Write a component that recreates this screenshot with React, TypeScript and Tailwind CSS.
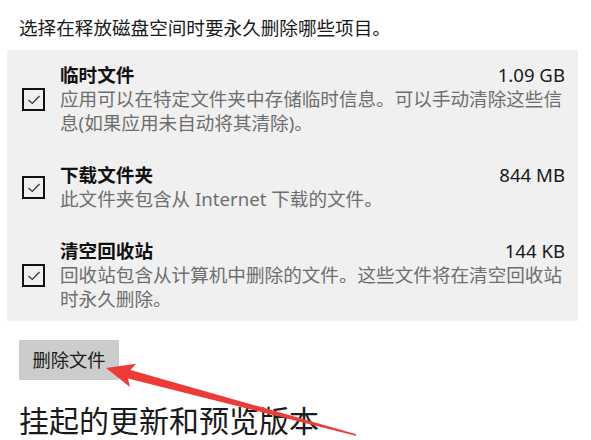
import React from "react";

const font = { fontFamily: '"Noto Sans", "Noto Sans CJK SC", sans-serif' };

function Check() {
  return (
    <div className="w-[23px] h-[23px] shrink-0 border-[2.5px] border-[#111] flex items-center justify-center">
      <svg width="18" height="18" viewBox="0 0 18 18">
        <polyline points="3.5,10 7.3,13.5 14.5,6" fill="none" stroke="#333" strokeWidth="1.2" />
      </svg>
    </div>
  );
}

function Item({ title, size, desc }: { title: string; size: string; desc: string }) {
  return (
    <div className="flex items-center gap-[15px]">
      <Check />
      <div className="flex-1 min-w-0">
        <div className="flex justify-between leading-[24px]">
          <span className="font-bold text-[#111]">{title}</span>
          <span className="text-[#1a1a1a]">{size}</span>
        </div>
        <div className="text-[#6e6e6e] leading-[24px]">{desc}</div>
      </div>
    </div>
  );
}

export default function App() {
  return (
    <div className="relative w-[591px] h-[440px] overflow-hidden bg-white text-[18.6px]" style={font}>
      <div className="pt-[16px] pl-[19px] leading-[24px] text-[#1a1a1a]">选择在释放磁盘空间时要永久删除哪些项目。</div>
      <div className="mt-[10px] ml-[7px] w-[571px] bg-[#f0f0f0] pl-[15px] pr-[13px] pt-[13px] pb-[10px] flex flex-col gap-[28px]">
        <Item title="临时文件" size="1.09 GB" desc="应用可以在特定文件夹中存储临时信息。可以手动清除这些信息(如果应用未自动将其清除)。" />
        <Item title="下载文件夹" size="844 MB" desc="此文件夹包含从 Internet 下载的文件。" />
        <Item title="清空回收站" size="144 KB" desc="回收站包含从计算机中删除的文件。这些文件将在清空回收站时永久删除。" />
      </div>
      <div className="ml-[19px] mt-[19px] w-[100px] h-[40px] bg-[#cccccc] flex items-center justify-center text-[#1a1a1a] text-[18.3px]">
        删除文件
      </div>
      <div className="ml-[19px] mt-[26px] text-[30px] leading-[30px] text-[#1a1a1a]">挂起的更新和预览版本</div>
      <svg className="absolute inset-0 pointer-events-none" width="591" height="440" viewBox="0 0 591 440">
        <polygon
          points="106,368 136.1,363.7 130.4,369.9 356.2,434.2 355.8,435.8 128,378.5 129.9,386.9"
          fill="#ee3b37"
        />
      </svg>
    </div>
  );
}
